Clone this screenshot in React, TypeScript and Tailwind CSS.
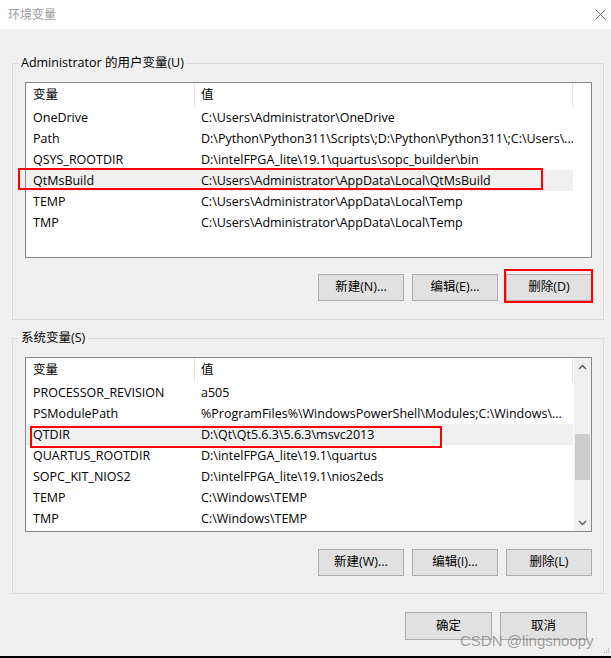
import React from "react";

type RowData = { name: string; value: string; selected?: boolean; mark?: React.ReactNode };

function Header() {
  return (
    <div className="flex h-[24px] w-full shrink-0">
      <div className="flex w-[168px] items-center pl-[7px] pt-[1px]">变量</div>
      <div className="w-px bg-[#e5e5e5]" />
      <div className="flex w-[377px] items-center pl-[6px] pt-[1px]">值</div>
      <div className="w-px bg-[#e5e5e5]" />
    </div>
  );
}

function Row({ name, value, selected, mark }: RowData) {
  return (
    <div
      className={
        selected
          ? "relative flex h-[21px] w-[547px] shrink-0 items-center bg-[#f0f0f0] pt-[1px]"
          : "relative flex h-[21px] w-[547px] shrink-0 items-center pt-[1px]"
      }
    >
      <div className="w-[169px] shrink-0 overflow-hidden whitespace-nowrap pl-[7px]">{name}</div>
      <div className="w-[378px] shrink-0 overflow-hidden whitespace-nowrap pl-[6px]">{value}</div>
      {mark}
    </div>
  );
}

function Btn({ label }: { label: string }) {
  return (
    <div className="flex h-[27px] w-[86px] items-center justify-center border border-[#adadad] bg-[#e1e1e1]">
      {label}
    </div>
  );
}

function BigBtn({ label }: { label: string }) {
  return (
    <div className="flex h-[28px] w-[87px] items-center justify-center border border-[#adadad] bg-[#e1e1e1]">
      {label}
    </div>
  );
}

const userRows: RowData[] = [
  { name: "OneDrive", value: "C:\\Users\\Administrator\\OneDrive" },
  { name: "Path", value: "D:\\Python\\Python311\\Scripts\\;D:\\Python\\Python311\\;C:\\Users\\..." },
  { name: "QSYS_ROOTDIR", value: "D:\\intelFPGA_lite\\19.1\\quartus\\sopc_builder\\bin" },
  {
    name: "QtMsBuild",
    value: "C:\\Users\\Administrator\\AppData\\Local\\QtMsBuild",
    selected: true,
    mark: <div className="absolute left-[-8px] top-[-2px] h-[22px] w-[525px] border-2 border-[#ff0000]" />,
  },
  { name: "TEMP", value: "C:\\Users\\Administrator\\AppData\\Local\\Temp" },
  { name: "TMP", value: "C:\\Users\\Administrator\\AppData\\Local\\Temp" },
];

const sysRows: RowData[] = [
  { name: "PROCESSOR_REVISION", value: "a505" },
  { name: "PSModulePath", value: "%ProgramFiles%\\WindowsPowerShell\\Modules;C:\\Windows\\..." },
  {
    name: "QTDIR",
    value: "D:\\Qt\\Qt5.6.3\\5.6.3\\msvc2013",
    selected: true,
    mark: <div className="absolute left-[4px] top-[2px] h-[22px] w-[412px] border-2 border-[#ff0000]" />,
  },
  { name: "QUARTUS_ROOTDIR", value: "D:\\intelFPGA_lite\\19.1\\quartus" },
  { name: "SOPC_KIT_NIOS2", value: "D:\\intelFPGA_lite\\19.1\\nios2eds" },
  { name: "TEMP", value: "C:\\Windows\\TEMP" },
  { name: "TMP", value: "C:\\Windows\\TEMP" },
];

function Chevron({ up }: { up?: boolean }) {
  return (
    <svg width="9" height="6" viewBox="0 0 9 6">
      <path
        d={up ? "M1 5 L4.5 1.5 L8 5" : "M1 1 L4.5 4.5 L8 1"}
        fill="none"
        stroke="#606060"
        strokeWidth="1.5"
      />
    </svg>
  );
}

export default function App() {
  return (
    <div className="relative flex h-[658px] w-[611px] flex-col overflow-hidden bg-[#f0f0f0] font-['Open_Sans','Noto_Sans_CJK_SC',sans-serif] text-[12.5px] text-black">
      {/* title bar */}
      <div className="flex h-[29px] shrink-0 items-center justify-between bg-white pl-[8px] pr-[5px]">
        <span className="text-[12px] text-[#9a9a9a]">环境变量</span>
        <svg width="11" height="11" viewBox="0 0 11 11">
          <path d="M0.5 0.5 L10.5 10.5 M10.5 0.5 L0.5 10.5" stroke="#707070" strokeWidth="1" />
        </svg>
      </div>

      {/* user variables */}
      <fieldset className="ml-[12px] mt-[25px] w-[592px] shrink-0 border border-[#dcdcdc] p-0 pb-[18px]">
        <legend className="ml-[6px] px-[2px] leading-[18px]">Administrator 的用户变量(U)</legend>
        <div className="ml-[12px] mt-[10px] flex h-[176px] w-[567px] flex-col border border-[#828790] bg-white">
          <Header />
          {userRows.map((r) => (
            <Row key={r.name} {...r} />
          ))}
        </div>
        <div className="ml-[12px] mt-[16px] flex w-[567px] justify-end gap-[8px]">
          <Btn label="新建(N)..." />
          <Btn label="编辑(E)..." />
          <div className="relative">
            <Btn label="删除(D)" />
            <div className="absolute -bottom-[2px] -left-[2px] -right-[1px] -top-[5px] border-2 border-[#ff0000]" />
          </div>
        </div>
      </fieldset>

      {/* system variables */}
      <fieldset className="ml-[12px] mt-[9px] w-[592px] shrink-0 border border-[#dcdcdc] p-0 pb-[17px]">
        <legend className="ml-[6px] px-[2px] leading-[18px]">系统变量(S)</legend>
        <div className="ml-[12px] mt-[10px] flex h-[175px] w-[567px] border border-[#828790] bg-white">
          <div className="flex flex-1 flex-col">
            <Header />
            {sysRows.map((r) => (
              <Row key={r.name} {...r} />
            ))}
          </div>
          <div className="flex w-[17px] flex-col bg-[#f0f0f0]">
            <div className="flex h-[17px] items-center justify-center">
              <Chevron up />
            </div>
            <div className="flex-1 pt-[59px]">
              <div className="ml-[1px] h-[46px] w-[15px] bg-[#cdcdcd]" />
            </div>
            <div className="flex h-[17px] items-center justify-center">
              <Chevron />
            </div>
          </div>
        </div>
        <div className="ml-[12px] mt-[17px] flex w-[567px] justify-end gap-[8px]">
          <Btn label="新建(W)..." />
          <Btn label="编辑(I)..." />
          <Btn label="删除(L)" />
        </div>
      </fieldset>

      {/* dialog buttons */}
      <div className="mt-[18px] flex shrink-0 justify-end gap-[8px] pr-[24px]">
        <BigBtn label="确定" />
        <BigBtn label="取消" />
      </div>

      <div className="mt-auto h-[2px] shrink-0 bg-black" />

      {/* watermark */}
      <div className="absolute left-[460px] top-[630px] font-['Liberation_Sans',sans-serif] text-[15px] text-[rgba(120,120,120,0.7)]">
        CSDN @lingsnoopy
      </div>
      {/* resize grip */}
      <svg className="absolute bottom-[4px] right-[1px]" width="6" height="6" viewBox="0 0 6 6">
        <rect x="4" y="0" width="1" height="1" fill="#b0b0b0" />
        <rect x="2" y="2" width="1" height="1" fill="#b0b0b0" />
        <rect x="4" y="2" width="1" height="1" fill="#b0b0b0" />
        <rect x="0" y="4" width="1" height="1" fill="#b0b0b0" />
        <rect x="2" y="4" width="1" height="1" fill="#b0b0b0" />
        <rect x="4" y="4" width="1" height="1" fill="#b0b0b0" />
      </svg>
    </div>
  );
}
